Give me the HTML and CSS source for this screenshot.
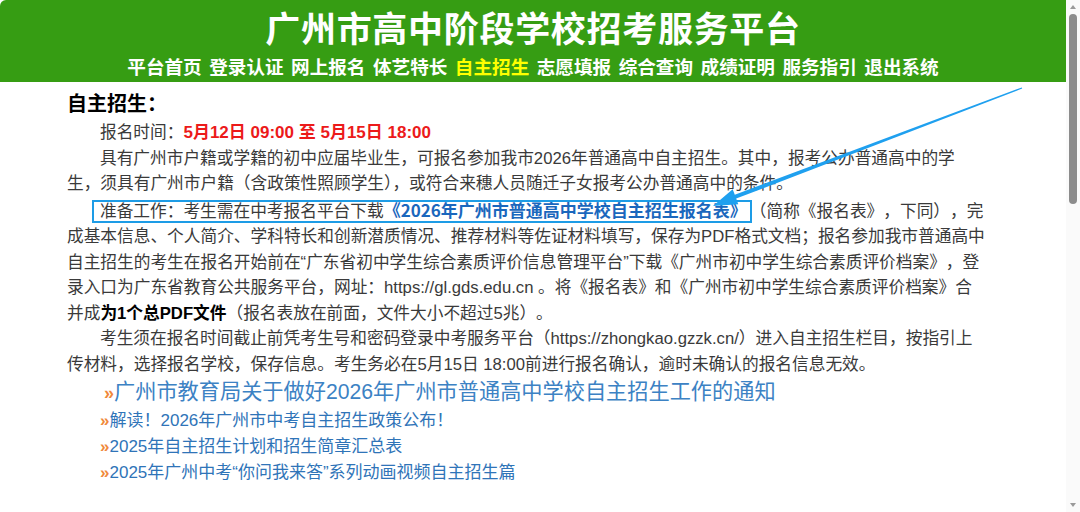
FILE: index.html
```html
<!DOCTYPE html>
<html lang="zh-CN">
<head>
<meta charset="utf-8">
<title>广州市高中阶段学校招考服务平台</title>
<link rel="stylesheet" href="styles.css">
</head>
<body>
<div class="page">
  <div class="main">
    <header class="top">
      <h1 class="title">广州市高中阶段学校招考服务平台</h1>
      <nav class="nav">
        <a>平台首页</a><a>登录认证</a><a>网上报名</a><a>体艺特长</a><a class="on">自主招生</a><a>志愿填报</a><a>综合查询</a><a>成绩证明</a><a>服务指引</a><a>退出系统</a>
      </nav>
    </header>
    <section class="content">
      <h2 class="heading">自主招生：</h2>
      <p class="para">报名时间：<b class="red">5月12日 09:00 至 5月15日 18:00</b></p>
      <p class="para">具有广州市户籍或学籍的初中应届毕业生，可报名参加我市2026年普通高中自主招生。其中，报考公办普通高中的学<br>生，须具有广州市户籍（含政策性照顾学生），或符合来穗人员随迁子女报考公办普通高中的条件。</p>
      <p class="para prep"><span class="boxed">准备工作：考生需在中考报名平台下载<a class="form-link">《2026年广州市普通高中学校自主招生报名表》</a></span>（简称《报名表》，下同），完<br>成基本信息、个人简介、学科特长和创新潜质情况、推荐材料等佐证材料填写，保存为PDF格式文档；报名参加我市普通高中<br>自主招生的考生在报名开始前在“广东省初中学生综合素质评价信息管理平台”下载《广州市初中学生综合素质评价档案》，登<br>录入口为广东省教育公共服务平台，网址：https://gl.gds.edu.cn 。将《报名表》和《广州市初中学生综合素质评价档案》合<br>并成<b class="strong">为1个总PDF文件</b>（报名表放在前面，文件大小不超过5兆）。</p>
      <p class="para">考生须在报名时间截止前凭考生号和密码登录中考服务平台（https://zhongkao.gzzk.cn/）进入自主招生栏目，按指引上<br>传材料，选择报名学校，保存信息。考生务必在5月15日 18:00前进行报名确认，逾时未确认的报名信息无效。</p>
      <ul class="links">
        <li class="link big"><span class="raquo">»</span>广州市教育局关于做好2026年广州市普通高中学校自主招生工作的通知</li>
        <li class="link"><span class="raquo">»</span>解读！2026年广州市中考自主招生政策公布！</li>
        <li class="link"><span class="raquo">»</span>2025年自主招生计划和招生简章汇总表</li>
        <li class="link"><span class="raquo">»</span>2025年广州中考“你问我来答”系列动画视频自主招生篇</li>
      </ul>
    </section>
    <svg class="arrow" width="1066" height="512" viewBox="0 0 1066 512" aria-hidden="true">
      <polygon points="1022.2,88.6 736.2,198.6 738.3,204.2 713,206 732.7,189.2 734.8,194.8 1021.8,87.4" fill="#1fa0ef"/>
    </svg>
  </div>
  <div class="scrollbar">
    <span class="sb-arrow up"></span>
    <div class="sb-track"><div class="sb-thumb"></div></div>
    <span class="sb-arrow down"></span>
  </div>
</div>
</body>
</html>
```
FILE: styles.css
```css
* { box-sizing: border-box; }
html, body { margin: 0; padding: 0; }
body {
  width: 1080px;
  height: 512px;
  overflow: hidden;
  background: #fff;
  font-family: "Liberation Sans", "Noto Sans CJK SC", sans-serif;
  color: #333;
}
.page {
  display: flex;
  height: 512px;
}
.main {
  position: relative;
  flex: 1;
  min-width: 0;
}
.top {
  background: #369d13;
  height: 82px;
  padding-top: 5px;
  text-align: center;
  border-top-left-radius: 6px;
}
.title {
  margin: 0;
  font-size: 35px;
  line-height: 44px;
  font-weight: 700;
  color: #fff;
  letter-spacing: 0.7px;
  font-family: "Noto Sans CJK SC", sans-serif;
}
.nav {
  display: flex;
  justify-content: center;
  gap: 7.5px;
  margin-top: 4px;
  font-family: "Noto Sans CJK SC", sans-serif;
  font-size: 18.6px;
  line-height: 26px;
  font-weight: 700;
}
.nav a { color: #fff; }
.nav a.on { color: #ffff00; }
.content {
  padding: 9px 0 0 67px;
}
.heading {
  margin: 0 0 3px;
  font-size: 20px;
  line-height: 26px;
  font-weight: 700;
  color: #000;
}
.para {
  margin: 0;
  font-size: 16.7px;
  line-height: 25.5px;
  text-indent: 33px;
  color: #3a3a3a;
  white-space: nowrap;
}
.red { color: #ec1a1a; font-weight: 700; font-size: 17px; }
.strong { color: #000; font-weight: 700; }
.prep {
  text-indent: 27px;
  text-spacing-trim: space-all;
}
.boxed {
  outline: 2px solid #1d9ce6;
  outline-offset: 0;
  padding: 0 3px 0 6px;
}
.form-link {
  color: #1a67bd;
  font-weight: 700;
  font-family: "Noto Sans CJK SC", sans-serif;
  font-size: 17px;
  letter-spacing: 0;
}
.links {
  list-style: none;
  margin: 0;
  padding: 0;
}
.link {
  font-size: 17px;
  line-height: 26px;
  color: #2f74b8;
  padding-left: 33px;
}
.link.big {
  font-size: 21.2px;
  line-height: 30px;
  padding-left: 37px;
  color: #3c82c4;
}
.raquo {
  color: #f0883a;
  font-weight: 700;
}
.link.big .raquo { font-size: 18px; }
.arrow {
  position: absolute;
  left: 0;
  top: 0;
  pointer-events: none;
}
.scrollbar {
  width: 14px;
  flex: none;
  background: #fafafa;
  display: flex;
  flex-direction: column;
  align-items: center;
}
.sb-arrow {
  width: 0;
  height: 0;
  border-left: 3px solid transparent;
  border-right: 3px solid transparent;
  margin: 5px 0;
}
.sb-arrow.up { border-bottom: 4px solid #9a9a9a; }
.sb-arrow.down { border-top: 4px solid #9a9a9a; margin-top: auto; }
.sb-track {
  width: 100%;
  display: flex;
  justify-content: center;
}
.sb-thumb {
  width: 8px;
  height: 190px;
  background: #8c8c8c;
  border-radius: 4px;
}
```
